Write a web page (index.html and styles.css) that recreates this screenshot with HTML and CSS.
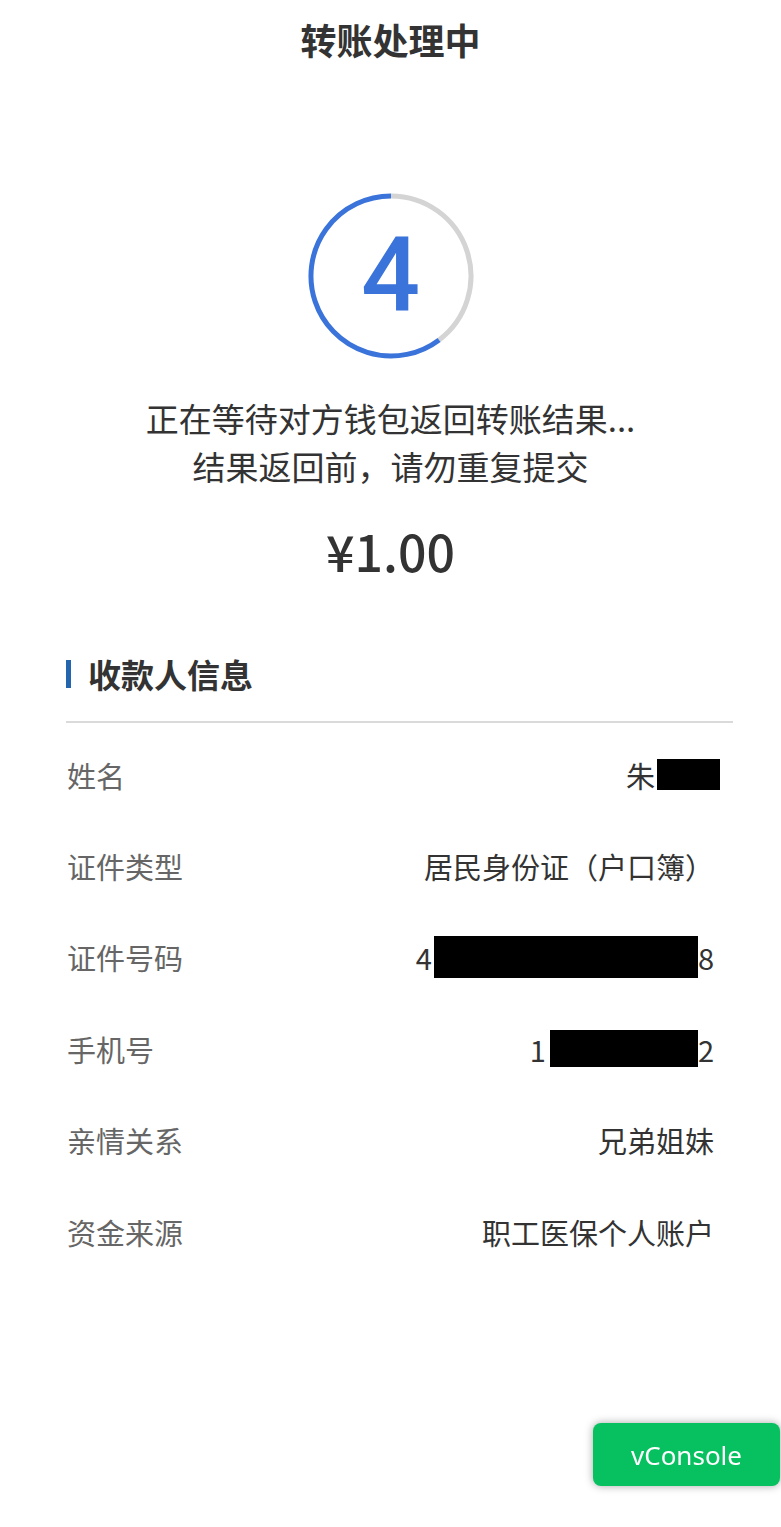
FILE: index.html
```html
<!DOCTYPE html>
<html lang="zh-CN">

<head>
    <meta charset="UTF-8">
    <meta name="viewport" content="width=device-width, initial-scale=1.0">
    <link rel="stylesheet" href="styles.css">
    <title>转账处理中</title>
</head>

<body>
    <div class="page">
        <h1 class="title">转账处理中</h1>

        <div class="timer">
            <svg class="ring" width="166" height="166" viewBox="0 0 166 166">
                <path d="M83 3 A80 80 0 0 1 131.1 146.9" fill="none" stroke="#d4d4d4" stroke-width="5" />
                <path d="M131.1 146.9 A80 80 0 1 1 83 3" fill="none" stroke="#3a73da" stroke-width="5" />
            </svg>
            <span class="count">4</span>
        </div>

        <div class="tips">
            <p>正在等待对方钱包返回转账结果...</p>
            <p>结果返回前，请勿重复提交</p>
        </div>

        <div class="amount">¥1.00</div>

        <div class="section">
            <div class="section-head">
                <span class="bar"></span>
                <h2>收款人信息</h2>
            </div>

            <div class="rows">
                <div class="row">
                    <span class="label">姓名</span>
                    <span class="value">朱<i class="mask mask-name"></i></span>
                </div>
                <div class="row">
                    <span class="label">证件类型</span>
                    <span class="value">居民身份证（户口簿）</span>
                </div>
                <div class="row">
                    <span class="label">证件号码</span>
                    <span class="value">4<i class="mask mask-id"></i>8</span>
                </div>
                <div class="row">
                    <span class="label">手机号</span>
                    <span class="value">1<i class="mask mask-phone"></i>2</span>
                </div>
                <div class="row">
                    <span class="label">亲情关系</span>
                    <span class="value">兄弟姐妹</span>
                </div>
                <div class="row">
                    <span class="label">资金来源</span>
                    <span class="value">职工医保个人账户</span>
                </div>
            </div>
        </div>
    </div>

    <div class="vconsole">vConsole</div>
</body>

</html>
```

FILE: styles.css
```css
* {
    margin: 0;
    padding: 0;
    box-sizing: border-box;
}

body {
    background: #fff;
    font-family: "Noto Sans CJK SC", "Noto Sans", sans-serif;
    color: #333;
}

.page {
    display: flex;
    flex-direction: column;
    align-items: center;
}

.title {
    font-size: 36px;
    font-weight: 700;
    line-height: 78px;
    color: #333;
}

.timer {
    margin-top: 115px;
    display: grid;
    place-items: center;
}

.ring,
.count {
    grid-area: 1 / 1;
}

.count {
    font-family: Roboto, "Noto Sans", sans-serif;
    font-size: 104px;
    font-weight: 500;
    line-height: 1;
    color: #3a73da;
}

.tips {
    margin-top: 35px;
    text-align: center;
    font-size: 33px;
    line-height: 48px;
    color: #333;
}

.amount {
    margin-top: 30px;
    font-size: 50px;
    font-weight: 500;
    line-height: 60px;
    color: #333;
}

.section {
    align-self: stretch;
    margin: 74px 48px 0 66px;
}

.section-head {
    display: flex;
    align-items: center;
    gap: 17px;
    padding-bottom: 27px;
    border-bottom: 2px solid #dadada;
}

.bar {
    width: 5px;
    height: 28px;
    background: #2466ad;
}

.section-head h2 {
    font-size: 33px;
    font-weight: 700;
    line-height: 40px;
    color: #333;
}

.rows {
    padding-top: 6px;
}

.row {
    height: 91.4px;
    display: flex;
    align-items: center;
    justify-content: space-between;
    padding: 0 19px 0 1px;
    font-size: 29px;
}

.label {
    color: #666;
}

.value {
    display: flex;
    align-items: center;
    color: #333;
}

.mask {
    display: inline-block;
    background: #000;
}

.mask-name {
    width: 63px;
    height: 31px;
    margin-left: 2px;
    margin-right: -6px;
}

.mask-id {
    width: 264px;
    height: 42px;
    margin-left: 2px;
}

.mask-phone {
    width: 148px;
    height: 37px;
    margin-left: 4px;
}

.vconsole {
    position: fixed;
    right: 1px;
    bottom: 41px;
    width: 187px;
    height: 63px;
    display: flex;
    align-items: center;
    justify-content: center;
    background: #07c160;
    border-radius: 8px;
    box-shadow: 0 0 8px rgba(0, 0, 0, 0.35);
    color: #fff;
    font-family: "Noto Sans", sans-serif;
    font-size: 26px;
}
```
